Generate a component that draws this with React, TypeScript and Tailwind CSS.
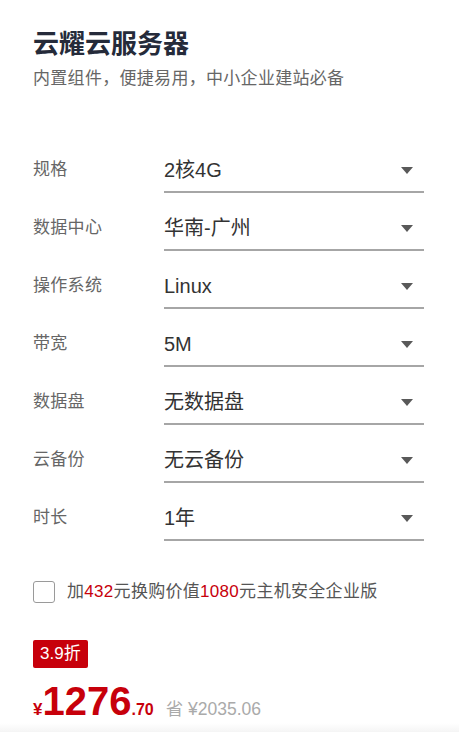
import React, { useState } from 'react';

const rows = [
  { label: '规格', value: '2核4G' },
  { label: '数据中心', value: '华南-广州' },
  { label: '操作系统', value: 'Linux' },
  { label: '带宽', value: '5M' },
  { label: '数据盘', value: '无数据盘' },
  { label: '云备份', value: '无云备份' },
  { label: '时长', value: '1年' },
];

function Arrow() {
  return (
    <svg width="12" height="7" viewBox="0 0 12 7" className="shrink-0">
      <polygon points="0,0 12,0 6,7" fill="#595959" />
    </svg>
  );
}

export default function App() {
  const [checked, setChecked] = useState(false);

  return (
    <div
      className="min-h-[732px] bg-white flex flex-col"
      style={{ fontFamily: '"Liberation Sans", "Noto Sans CJK SC", sans-serif' }}
    >
      <div className="pt-[27px] pl-[33px] pr-[35px] flex-1">
        <h1 className="text-[26px] leading-[34px] font-bold text-[#252b3a]">云耀云服务器</h1>
        <p className="mt-[6px] text-[17px] leading-[24px] tracking-[0.3px] text-[#666]">内置组件，便捷易用，中小企业建站必备</p>

        <div className="mt-[67px] flex flex-col gap-[23px]">
          {rows.map((r) => (
            <div key={r.label} className="flex items-start">
              <div className="w-[131px] shrink-0 text-[17px] leading-[24px] tracking-[0.3px] text-[#666]">{r.label}</div>
              <div className="flex-1 flex items-center justify-between pb-[9px] border-b-2 border-[#a6a6a6] pr-[11px]">
                <span className="text-[20px] leading-[24px] text-[#333]">{r.value}</span>
                <Arrow />
              </div>
            </div>
          ))}
        </div>

        <label className="mt-[39px] flex items-center cursor-pointer">
          <span
            onClick={() => setChecked(!checked)}
            className={
              'w-[22px] h-[22px] rounded-[3px] border-[1.5px] border-[#9a9a9a] shrink-0 ' +
              (checked ? 'bg-[#c7000b]' : 'bg-white')
            }
          />
          <span className="ml-[12px] text-[17px] leading-[24px] tracking-[0.3px] text-[#555]">
            加<span className="text-[#c7000b]">432</span>元换购价值<span className="text-[#c7000b]">1080</span>元主机安全企业版
          </span>
        </label>

        <div className="mt-[36px] flex">
          <span className="h-[28px] px-[7px] flex items-center rounded-[2px] bg-[#c7000b] text-white text-[17px]">3.9折</span>
        </div>

        <div className="mt-[13px] flex items-baseline text-[#c7000b] font-bold">
          <span className="text-[17px]">¥</span>
          <span className="text-[40px] leading-[40px]">1276</span>
          <span className="text-[16px]">.70</span>
          <span className="ml-[12px] text-[17.5px] font-normal text-[#aaa]">省 ¥2035.06</span>
        </div>
      </div>
      <div className="h-[14px] bg-gradient-to-b from-white to-[#efefef]" />
    </div>
  );
}
